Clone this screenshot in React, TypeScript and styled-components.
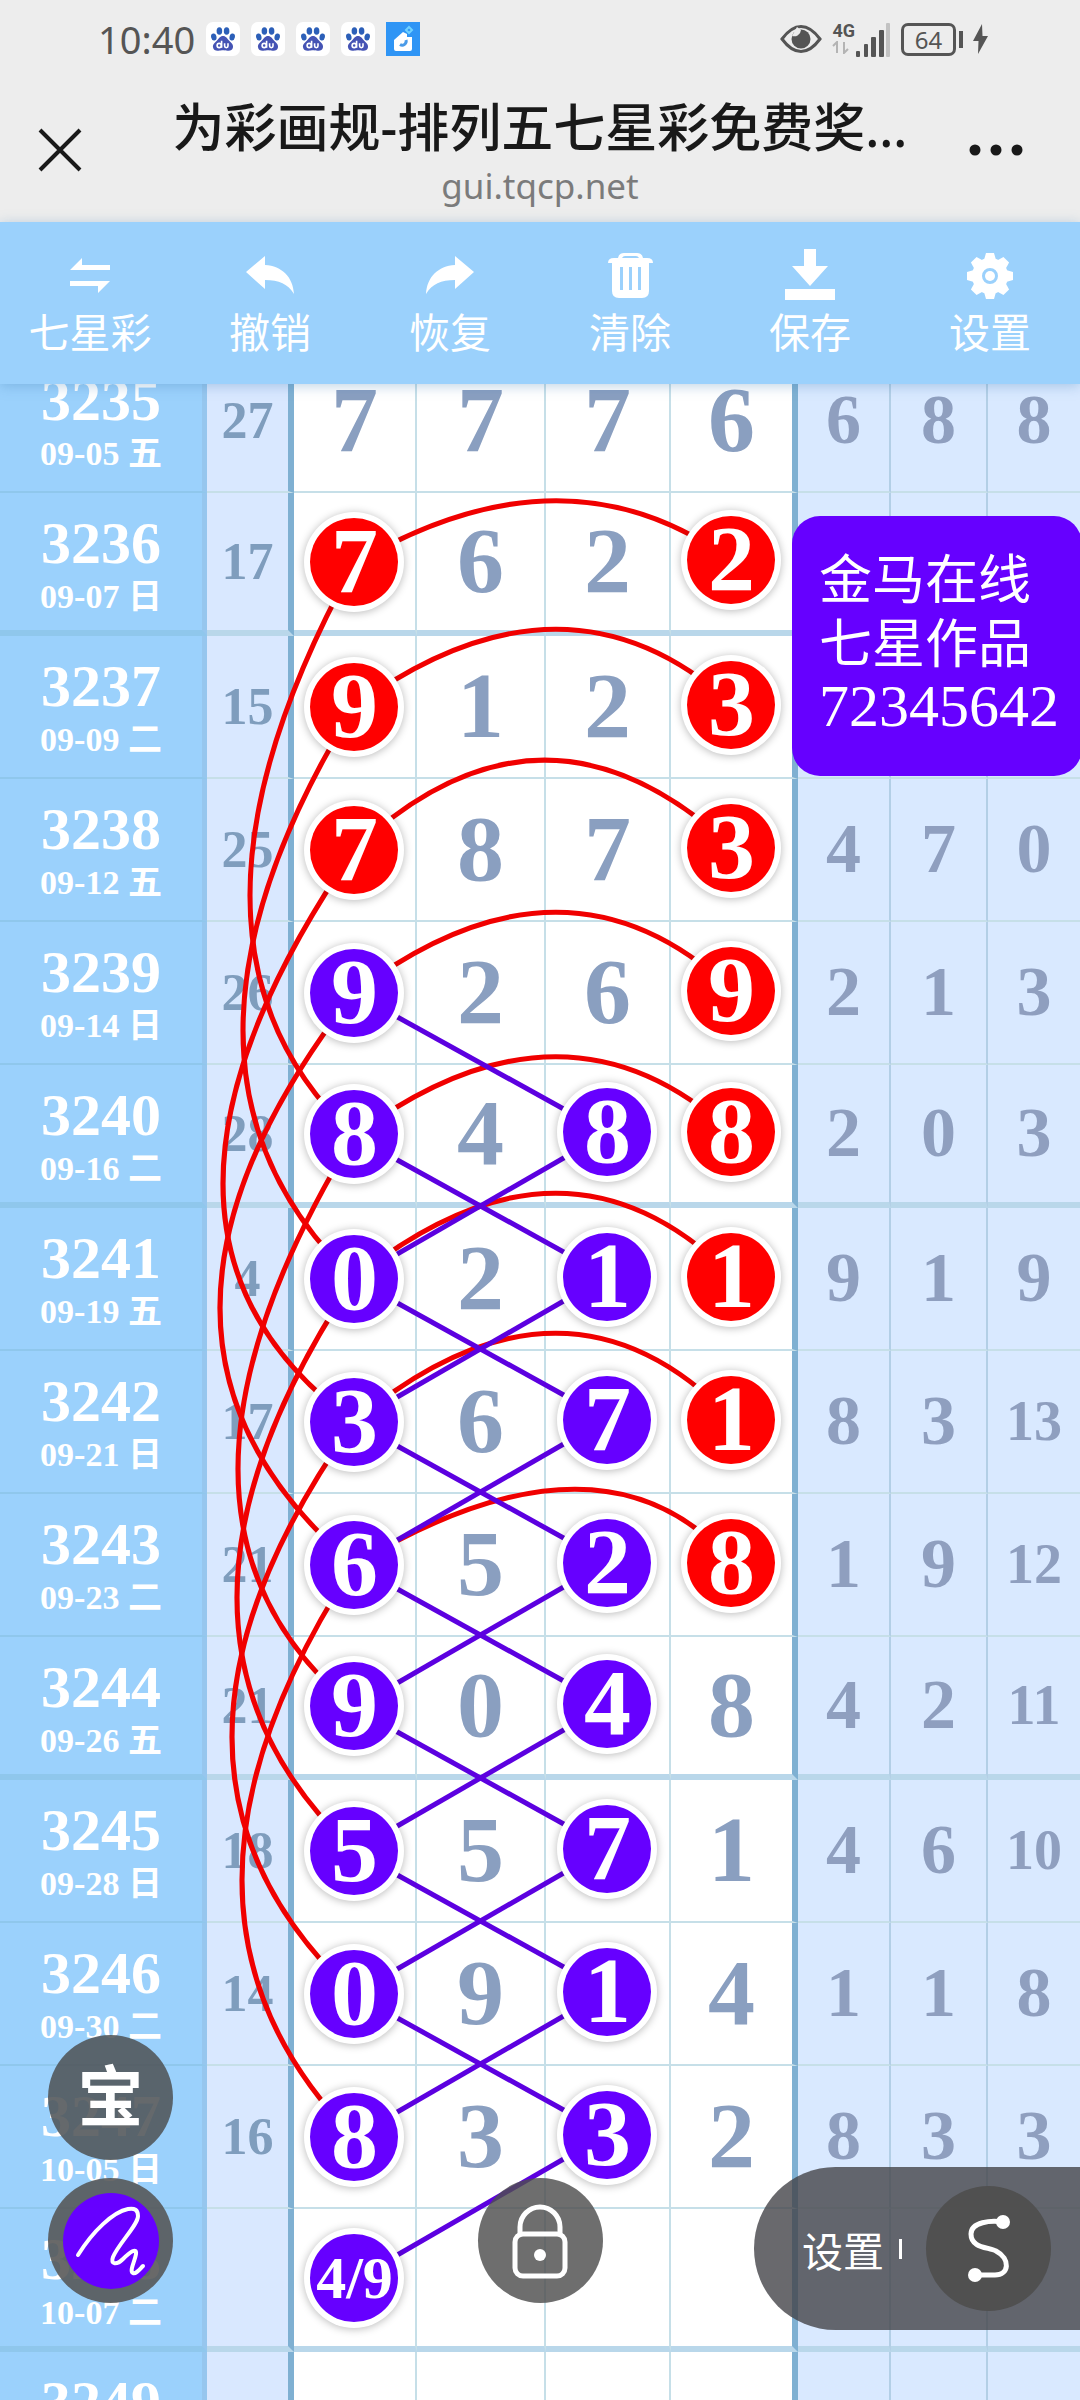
import React from "react";
import styled, { createGlobalStyle, css } from "styled-components";

const SANS = `"Noto Sans", "Noto Sans CJK SC", sans-serif`;
const CJK = `"Noto Sans CJK SC", "Noto Sans", sans-serif`;
const SERIF = `"Liberation Serif", "Noto Sans CJK SC", serif`;

const RED = "#ff0000";
const PURPLE = "#6600ff";
const ROW = 143;

const GlobalStyle = createGlobalStyle`
  * { box-sizing: border-box; }
  body { margin: 0; background: #ededed; }
`;

const PlainButton = styled.button`
  padding: 0;
  border: 0;
  background: none;
  color: inherit;
  cursor: pointer;
`;

const Page = styled.div`
  display: flex;
  flex-direction: column;
  height: 100vh;
  overflow: hidden;
  font-family: ${SANS};
`;

/* ---------- status bar ---------- */

const StatusBar = styled.div`
  display: flex;
  align-items: center;
  justify-content: space-between;
  height: 78px;
  padding: 0 92px 0 98px;
  color: #555;
`;

const StatusGroup = styled.div<{ $gap: number }>`
  display: flex;
  align-items: center;
  gap: ${(p) => p.$gap}px;
`;

const Clock = styled.time`
  font-size: 38px;
  line-height: 78px;
`;

const Notice = styled.span<{ $bg: string; $radius: number }>`
  display: grid;
  place-items: center;
  width: 34px;
  height: 34px;
  border-radius: ${(p) => p.$radius}px;
  background: ${(p) => p.$bg};
`;

const Network = styled.div`
  display: flex;
  align-items: flex-end;
  height: 36px;
`;

const NetworkType = styled.div`
  display: flex;
  flex-direction: column;
  height: 36px;
  font: 700 18px/20px Roboto, sans-serif;
`;

const Battery = styled.div`
  display: flex;
  align-items: center;
  gap: 3px;
`;

const BatteryBody = styled.span`
  display: grid;
  place-items: center;
  width: 55px;
  height: 33px;
  border: 3px solid #555;
  border-radius: 7px;
  font-size: 24px;
  line-height: 27px;
`;

const BatteryNub = styled.span`
  width: 4px;
  height: 17px;
  background: #555;
`;

/* ---------- title bar ---------- */

const NavBar = styled.header`
  display: grid;
  grid-template-columns: 168px 1fr 168px;
  align-items: center;
  height: 144px;
`;

const NavButton = styled(PlainButton)<{ $start?: boolean }>`
  display: grid;
  align-items: center;
  justify-items: ${(p) => (p.$start ? "start" : "center")};
  height: 144px;
  padding-left: ${(p) => (p.$start ? 38 : 0)}px;
`;

const Heading = styled.div`
  display: flex;
  flex-direction: column;
  align-items: center;
  padding-top: 4px;
  white-space: nowrap;
`;

const Title = styled.h1`
  margin: 0;
  color: #191919;
  font: 500 52px/68px ${SANS};
`;

const Host = styled.div`
  color: #7b7b7b;
  font-size: 35px;
  line-height: 50px;
`;

/* ---------- toolbar ---------- */

const Toolbar = styled.nav`
  position: relative;
  z-index: 5;
  display: grid;
  grid-template-columns: repeat(6, 1fr);
  height: 162px;
  flex: none;
  background: #9bd1fc;
  box-shadow: 0 2px 12px rgba(70, 130, 180, 0.35);
`;

const Tool = styled(PlainButton)`
  display: flex;
  flex-direction: column;
  align-items: center;
  justify-content: flex-start;
  padding-top: 26px;
  color: #fff;
`;

const ToolLabel = styled.span`
  font: 400 41px/60px ${CJK};
`;

/* ---------- board ---------- */

const Board = styled.main`
  position: relative;
  flex: 1;
  min-height: 0;
  overflow: hidden;
  background: #fff;
`;

const Scroll = styled.div`
  position: relative;
  margin-top: -34px;
`;

const Chart = styled.table`
  width: 100%;
  table-layout: fixed;
  border-collapse: separate;
  border-spacing: 0;
  font-family: ${SERIF};
  text-align: center;
`;

const Row = styled.tr<{ $thick: boolean }>`
  height: ${ROW}px;

  > * {
    height: ${ROW}px;
    border-bottom: ${(p) => (p.$thick ? "6px solid #b9d7ea" : "2px solid #c6dfe8")};
  }
  > th {
    border-bottom-color: #8fc7ec;
  }
`;

const Issue = styled.th`
  padding: 18px 0 0;
  vertical-align: top;
  background: #9bd1fc;
  border-right: 5px solid #96c6ee;
  color: #fff;
  font-weight: 700;
`;

const IssueNo = styled.div`
  font-size: 60px;
  line-height: 64px;
`;

const IssueDate = styled.div`
  font-size: 34px;
  line-height: 44px;
  white-space: nowrap;
`;

const cell = css`
  padding: 0;
  vertical-align: middle;
  line-height: 1;
`;

const Sum = styled.td`
  ${cell}
  background: #d9e8ff;
  border-right: 6px solid #7fb0d2;
  color: #7f9dbd;
  font-size: 52px;
  font-weight: 700;
`;

const Digit = styled.td<{ $last: boolean }>`
  ${cell}
  padding-bottom: 4px;
  background: #fff;
  border-right: ${(p) => (p.$last ? "6px solid #7fb0d2" : "2px solid #c6dfe8")};
  color: #8a9fc0;
  font-size: 94px;
  font-weight: 700;
`;

const Extra = styled.td<{ $small: boolean }>`
  ${cell}
  padding-bottom: 2px;
  background: #d9e9ff;
  border-right: 2px solid #b3cfe6;
  color: #8f9fbf;
  font-size: ${(p) => (p.$small ? 56 : 70)}px;
  font-weight: 700;

  &:last-child {
    border-right: 0;
  }
`;

const Mark = styled.span<{ $color: string; $low: boolean; $small: boolean }>`
  position: relative;
  z-index: 2;
  display: flex;
  align-items: center;
  justify-content: center;
  width: 88px;
  height: 88px;
  margin: ${(p) => (p.$low ? "4px auto 0" : "0 auto")};
  padding-bottom: ${(p) => (p.$small ? 0 : 4)}px;
  border-radius: 50%;
  background: ${(p) => p.$color};
  box-shadow: 0 0 0 6px #fff, 0 1px 9px 6px rgba(0, 0, 0, 0.28);
  color: #fff;
  font-size: ${(p) => (p.$small ? 60 : 94)}px;
  line-height: 80px;
`;

const Lines = styled.svg`
  position: absolute;
  inset: 0;
  z-index: 1;
  width: 100%;
  height: 100%;
  pointer-events: none;

  path {
    fill: none;
    stroke-width: 5px;
    vector-effect: non-scaling-stroke;
  }
`;

const Note = styled.aside`
  position: absolute;
  z-index: 3;
  top: 132px;
  right: -2px;
  width: 290px;
  height: 260px;
  padding: 28px 0 0 27px;
  border-radius: 28px;
  background: ${PURPLE};
  color: #fff;
`;

const NoteLine = styled.div`
  font: 400 53px/64px ${CJK};
  white-space: nowrap;
`;

const NoteDigits = styled.div`
  font: 400 60px/68px ${SERIF};
`;

/* ---------- floating controls ---------- */

const Stack = styled.div`
  position: absolute;
  z-index: 4;
  left: 48px;
  bottom: 97px;
  display: flex;
  flex-direction: column;
  gap: 18px;
`;

const Round = styled(PlainButton)<{ $bg: string }>`
  display: grid;
  place-items: center;
  width: 125px;
  height: 125px;
  border-radius: 50%;
  background: ${(p) => p.$bg};
  color: #fff;
`;

const GlyphRound = styled(Round)`
  padding-bottom: 12px;
  font: 700 66px/1 ${CJK};
`;

const PenColor = styled.span`
  display: grid;
  place-items: center;
  width: 96px;
  height: 96px;
  border-radius: 50%;
  background: ${PURPLE};
`;

const LockSlot = styled.div`
  position: absolute;
  z-index: 4;
  bottom: 97px;
  left: 0;
  right: 0;
  display: flex;
  justify-content: center;
`;

const Pill = styled.div`
  position: absolute;
  z-index: 4;
  right: 0;
  bottom: 70px;
  display: flex;
  align-items: center;
  height: 163px;
  padding: 0 29px 0 48px;
  border-radius: 82px 0 0 82px;
  background: rgba(68, 68, 72, 0.8);
  color: #fff;
`;

const PillLabel = styled(PlainButton)`
  font: 400 41px/60px ${CJK};
`;

const PillBar = styled.span`
  width: 3px;
  height: 20px;
  margin: 0 24px 0 15px;
  background: #fff;
`;

/* ---------- data ---------- */

type Draw = {
  no: string;
  date: string;
  sum: string;
  main: string[];
  extra: string[];
};

const d = (no: string, date: string, sum: string, main: string, extra: string): Draw => ({
  no,
  date,
  sum,
  main: main.split(" "),
  extra: extra.split(" "),
});

const DRAWS: Draw[] = [
  d("3235", "09-05 五", "27", "7 7 7 6", "6 8 8"),
  d("3236", "09-07 日", "17", "7 6 2 2", "  "),
  d("3237", "09-09 二", "15", "9 1 2 3", "  "),
  d("3238", "09-12 五", "25", "7 8 7 3", "4 7 0"),
  d("3239", "09-14 日", "26", "9 2 6 9", "2 1 3"),
  d("3240", "09-16 二", "28", "8 4 8 8", "2 0 3"),
  d("3241", "09-19 五", "4", "0 2 1 1", "9 1 9"),
  d("3242", "09-21 日", "17", "3 6 7 1", "8 3 13"),
  d("3243", "09-23 二", "21", "6 5 2 8", "1 9 12"),
  d("3244", "09-26 五", "21", "9 0 4 8", "4 2 11"),
  d("3245", "09-28 日", "18", "5 5 7 1", "4 6 10"),
  d("3246", "09-30 二", "14", "0 9 1 4", "1 1 8"),
  d("3247", "10-05 日", "16", "8 3 3 2", "8 3 3"),
  d("3248", "10-07 二", "", "4/9   ", "  "),
  d("3249", "10-10 五", "", "   ", "  "),
];

const COLUMNS = [207, 87, 123, 129, 125, 127, 93, 97, 92];
const THICK_AFTER = ["3236", "3240", "3244", "3248"];

const markColor = (row: number, col: number): string | null => {
  if (col === 0 && row >= 1 && row <= 13) return row <= 3 ? RED : PURPLE;
  if (col === 2 && row >= 5 && row <= 12) return PURPLE;
  if (col === 3 && row >= 1 && row <= 8) return RED;
  return null;
};

const X0 = 354;
const X2 = 607;
const X3 = 732;
const centre = (row: number) => row * ROW + 71;

// Bow over each row: control x, control height above the row centre
const BOWS: [number, number][] = [
  [565, 125],
  [565, 154],
  [543, 178],
  [565, 160],
  [565, 157],
  [565, 170],
  [565, 176],
  [603, 150],
];

// Bow to the left, four rows down: control x, control depth below the start
const SIDES: [number, number][] = [
  [146, 377],
  [132, 361],
  [92, 381],
  [86, 344],
  [122, 380],
  [120, 351],
  [110, 344],
  [130, 344],
];

const redPaths = [
  ...BOWS.map(([x, up], i) => {
    const y = centre(i + 1);
    return `M${X0} ${y}Q${x} ${y - up} ${X3} ${y - 3}`;
  }),
  ...SIDES.map(([x, down], i) => {
    const y = centre(i + 1);
    return `M${X0} ${y}Q${x} ${y + down} ${X0} ${y + 4 * ROW}`;
  }),
];

const purplePaths = Array.from({ length: 8 }, (_, i) => [
  `M${X0} ${centre(i + 4)}L${X2} ${centre(i + 5) - 3}`,
  `M${X2} ${centre(i + 5) - 3}L${X0} ${centre(i + 6)}`,
]).flat();

/* ---------- icons ---------- */

const Paw = () => (
  <svg width="26" height="26" viewBox="0 0 26 26" aria-hidden="true">
    <g fill="#2c5fb8">
      <ellipse cx="3.8" cy="11" rx="2.7" ry="3.6" transform="rotate(-12 3.8 11)" />
      <ellipse cx="9.4" cy="5" rx="2.8" ry="3.8" />
      <ellipse cx="16.6" cy="5" rx="2.8" ry="3.8" />
      <ellipse cx="22.2" cy="11" rx="2.7" ry="3.6" transform="rotate(12 22.2 11)" />
      <path
        fill="#4553b4"
        d="M13 10c3 0 4.200 2.500 6 4.500s4.500 3.600 4 6.800c-.5 3-3 3.700-5.500 3.400-2-.3-3-.5-4.500-.5s-2.500.2-4.500.5C6 25 3.500 24.300 3 21.300c-.5-3.200 2.200-4.800 4-6.800s3-4.500 6-4.500z"
      />
    </g>
    <g fill="none" stroke="#fff" strokeWidth="1.6">
      <circle cx="9.200" cy="19.500" r="2.100" />
      <path d="M11.600 14.800v7M14.600 17.300v2.800q0 1.600 1.700 1.600t1.700-1.600v-2.800" />
    </g>
  </svg>
);

const HomeApp = () => (
  <svg width="34" height="34" viewBox="0 0 34 34" aria-hidden="true">
    <path fill="#fff" d="M8 18l9-8 4 2v3h5v12q0 2-2 2H10q-2 0-2-2z" />
    <path fill="none" stroke="#6fd2ff" strokeWidth="2" d="M23 5l3 3-3 3-3-3z" />
    <path fill="none" stroke="#4a9be8" strokeWidth="3" d="M14 22.500a4 4 0 0 0 6-4.500" />
  </svg>
);

const Eye = () => (
  <svg width="42" height="30" viewBox="0 0 42 30" aria-hidden="true">
    <path d="M2 15C9 5.500 15 2.500 21 2.500S33 5.500 40 15C33 24.500 27 27.500 21 27.500S9 24.500 2 15z" fill="none" stroke="#555" strokeWidth="3" />
    <circle cx="21" cy="15" r="9.500" fill="#555" />
    <path d="M12 12a7 7 0 0 0 9-6L17 3z" fill="#ededed" />
  </svg>
);

const Signal = () => (
  <svg width="36" height="34" viewBox="0 0 36 34" aria-hidden="true">
    <g fill="#555">
      <rect x="1" y="28" width="4" height="6" rx="1" />
      <rect x="9" y="21" width="4" height="13" rx="1" />
      <rect x="16" y="14" width="5" height="20" rx="1" />
      <rect x="24" y="7" width="5" height="27" rx="1" />
    </g>
    <rect x="31" y="0" width="4" height="34" rx="1" fill="#c2c2c2" />
  </svg>
);

const Transfer = () => (
  <svg width="17" height="13" viewBox="0 0 17 13" aria-hidden="true">
    <path d="M1 5l4-4v11M12 1v11l4-4" fill="none" stroke="#b4b4b4" strokeWidth="2" />
  </svg>
);

const Bolt = () => (
  <svg width="15" height="30" viewBox="0 0 15 30" aria-hidden="true">
    <path d="M9 0L0 17h5.500L5 30l10-18H9.500z" fill="#555" />
  </svg>
);

const Close = () => (
  <svg width="44" height="44" viewBox="0 0 44 44" aria-hidden="true">
    <path d="M2 2l40 40M42 2L2 42" stroke="#191919" strokeWidth="4" />
  </svg>
);

const More = () => (
  <svg width="54" height="12" viewBox="0 0 54 12" aria-hidden="true">
    <g fill="#191919">
      <circle cx="6" cy="6" r="5.500" />
      <circle cx="27" cy="6" r="5.500" />
      <circle cx="48" cy="6" r="5.500" />
    </g>
  </svg>
);

const ToolIcon = ({ children }: { children: React.ReactNode }) => (
  <svg width="52" height="52" viewBox="0 0 52 52" fill="#fff" aria-hidden="true">
    {children}
  </svg>
);

const TOOLS: { label: string; icon: React.ReactNode }[] = [
  {
    label: "七星彩",
    icon: <path d="M6 22L18 10v7h28v5zM46 33L34 45v-7H6v-5z" />,
  },
  {
    label: "撤销",
    icon: <path d="M2 24L21 8v9c17 1 28 12 29 29-6-10-15-14-29-14v9z" />,
  },
  {
    label: "恢复",
    icon: <path d="M50 24L31 8v9C14 18 3 29 2 46c6-10 15-14 29-14v9z" />,
  },
  {
    label: "清除",
    icon: (
      <>
        <path
          fillRule="evenodd"
          d="M4 15q0-5 6-5h4q1-5 6-5h13q5 0 6 5h4q6 0 6 5zm14-5h17q-1-2-3-2H21q-2 0-3 2z"
        />
        <path
          fillRule="evenodd"
          d="M8 15h37v28q0 7-7 7H15q-7 0-7-7zm8 4v23h3V19zm9 0v23h3V19zm9 0v23h3V19z"
        />
      </>
    ),
  },
  {
    label: "保存",
    icon: <path d="M20 1h12v17h12L26 38 8 18h12zM1 41h50v11H1z" />,
  },
  {
    label: "设置",
    icon: (
      <>
        <circle cx="26" cy="28" r="13" fill="none" stroke="#fff" strokeWidth="10" />
        {Array.from({ length: 8 }, (_, i) => (
          <path key={i} d="M20 12l2-7h8l2 7z" transform={`rotate(${i * 45} 26 28)`} />
        ))}
        <circle cx="26" cy="28" r="5" />
      </>
    ),
  },
];

const Scribble = () => (
  <svg width="96" height="96" viewBox="0 0 96 96" aria-hidden="true">
    <path
      d="M15 62C30 38 50 19 65 16q10-2 10 7C75 32 56 50 50 64c-3 8 4 8 10 2 7-7 14-12 13-5C72 68 66 78 70 80c3 1 6-3 10-7"
      fill="none"
      stroke="#fff"
      strokeWidth="4"
      strokeLinecap="round"
      strokeLinejoin="round"
    />
  </svg>
);

const Lock = () => (
  <svg width="56" height="76" viewBox="0 0 56 76" aria-hidden="true">
    <rect x="3" y="31" width="50" height="42" rx="8" fill="none" stroke="#fff" strokeWidth="5" />
    <path d="M8 31V24a20 20 0 0 1 40 0v7" fill="none" stroke="#fff" strokeWidth="5" />
    <circle cx="28" cy="52" r="6" fill="#fff" />
  </svg>
);

const Curve = () => (
  <svg width="44" height="70" viewBox="0 0 44 70" aria-hidden="true">
    <path
      d="M36 8C24 6 4 8 4 20C4 34 21 33 29 37C44 45 42 61 28 61H8"
      fill="none"
      stroke="#fff"
      strokeWidth="5"
    />
    <circle cx="36" cy="8" r="7" fill="#fff" />
    <circle cx="8" cy="61" r="7" fill="#fff" />
  </svg>
);

/* ---------- app ---------- */

export default function App() {
  return (
    <Page>
      <GlobalStyle />
      <StatusBar>
        <StatusGroup $gap={11}>
          <Clock>10:40</Clock>
          {[0, 1, 2, 3].map((i) => (
            <Notice key={i} $bg="#fff" $radius={7}>
              <Paw />
            </Notice>
          ))}
          <Notice $bg="#2f95f5" $radius={0}>
            <HomeApp />
          </Notice>
        </StatusGroup>
        <StatusGroup $gap={10}>
          <Eye />
          <Network>
            <NetworkType>
              4G
              <Transfer />
            </NetworkType>
            <Signal />
          </Network>
          <Battery>
            <BatteryBody>64</BatteryBody>
            <BatteryNub />
          </Battery>
          <Bolt />
        </StatusGroup>
      </StatusBar>

      <NavBar>
        <NavButton $start aria-label="关闭">
          <Close />
        </NavButton>
        <Heading>
          <Title>为彩画规-排列五七星彩免费奖…</Title>
          <Host>gui.tqcp.net</Host>
        </Heading>
        <NavButton aria-label="更多">
          <More />
        </NavButton>
      </NavBar>

      <Toolbar>
        {TOOLS.map((t) => (
          <Tool key={t.label}>
            <ToolIcon>{t.icon}</ToolIcon>
            <ToolLabel>{t.label}</ToolLabel>
          </Tool>
        ))}
      </Toolbar>

      <Board>
        <Scroll>
          <Chart>
            <colgroup>
              {COLUMNS.map((w, i) => (
                <col key={i} style={{ width: `${(w / 1080) * 100}%` }} />
              ))}
            </colgroup>
            <tbody>
              {DRAWS.map((draw, row) => (
                <Row key={draw.no} $thick={THICK_AFTER.includes(draw.no)}>
                  <Issue scope="row">
                    <IssueNo>{draw.no}</IssueNo>
                    <IssueDate>{draw.date}</IssueDate>
                  </Issue>
                  <Sum>{draw.sum}</Sum>
                  {draw.main.map((n, col) => {
                    const color = markColor(row, col);
                    return (
                      <Digit key={col} $last={col === 3}>
                        {color ? (
                          <Mark $color={color} $low={col === 0} $small={n.length > 1}>
                            {n}
                          </Mark>
                        ) : (
                          n
                        )}
                      </Digit>
                    );
                  })}
                  {draw.extra.map((n, col) => (
                    <Extra key={col} $small={n.length > 1}>
                      {n}
                    </Extra>
                  ))}
                </Row>
              ))}
            </tbody>
          </Chart>
          <Lines viewBox={`0 0 1080 ${DRAWS.length * ROW}`} preserveAspectRatio="none" aria-hidden="true">
            {redPaths.map((p) => (
              <path key={p} d={p} stroke="#f00000" />
            ))}
            {purplePaths.map((p) => (
              <path key={p} d={p} stroke="#5c00e0" />
            ))}
          </Lines>
        </Scroll>

        <Note>
          <NoteLine>金马在线</NoteLine>
          <NoteLine>七星作品</NoteLine>
          <NoteDigits>72345642</NoteDigits>
        </Note>

        <Stack>
          <GlyphRound $bg="rgba(80, 84, 88, 0.88)">宝</GlyphRound>
          <Round $bg="rgba(84, 84, 84, 0.88)" aria-label="画笔">
            <PenColor>
              <Scribble />
            </PenColor>
          </Round>
        </Stack>

        <LockSlot>
          <Round $bg="rgba(78, 78, 78, 0.82)" aria-label="锁定">
            <Lock />
          </Round>
        </LockSlot>

        <Pill>
          <PillLabel>设置</PillLabel>
          <PillBar />
          <Round $bg="#505050" aria-label="曲线">
            <Curve />
          </Round>
        </Pill>
      </Board>
    </Page>
  );
}
